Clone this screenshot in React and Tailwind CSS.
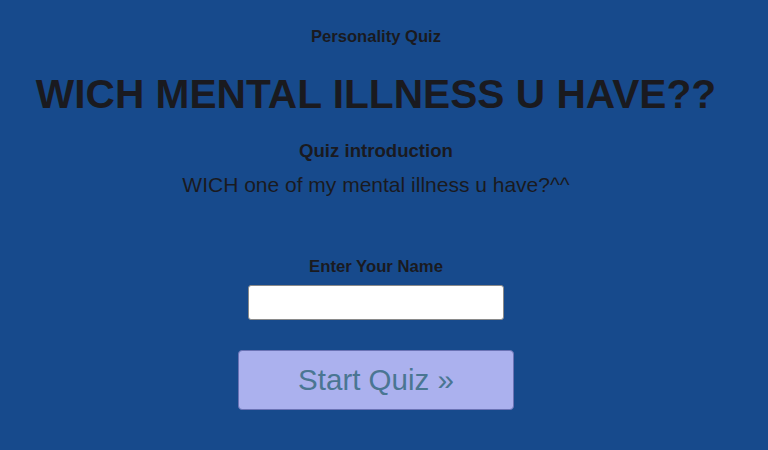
import React from "react";

const App = () => {
  return (
    <div
      className="min-h-[450px] w-full bg-[#174a8c] text-[#1a1a1f]"
      style={{ fontFamily: '"Liberation Sans", Arial, sans-serif' }}
    >
      <div className="flex w-[752px] flex-col items-center">
        {/* header */}
        <p className="mt-[27px] text-[16.6px] font-bold leading-[20px]">
          Personality Quiz
        </p>
        <h1 className="mt-[24px] text-[40.7px] font-bold leading-[46px]">
          WICH MENTAL ILLNESS U HAVE??
        </h1>

        {/* intro */}
        <h2 className="mt-[24px] text-[18.6px] font-bold leading-[20px]">
          Quiz introduction
        </h2>
        <p className="mt-[12px] text-[21px] leading-[24px]">
          WICH one of my mental illness u have?^^
        </p>

        {/* name form */}
        <label
          htmlFor="name"
          className="mt-[60px] text-[16.7px] font-bold leading-[20px]"
        >
          Enter Your Name
        </label>
        <input
          id="name"
          type="text"
          className="mt-[8px] h-[35px] w-[256px] rounded-[3px] border border-[#8a8a8a] bg-white px-2 outline-none"
        />
        <button
          type="button"
          className="mt-[30px] h-[60px] w-[276px] rounded-[4px] border border-[#6b73b5] bg-[#abb1ee] text-[29.5px] text-[#4a7692]"
        >
          Start Quiz »
        </button>
      </div>
    </div>
  );
};

export default App;
